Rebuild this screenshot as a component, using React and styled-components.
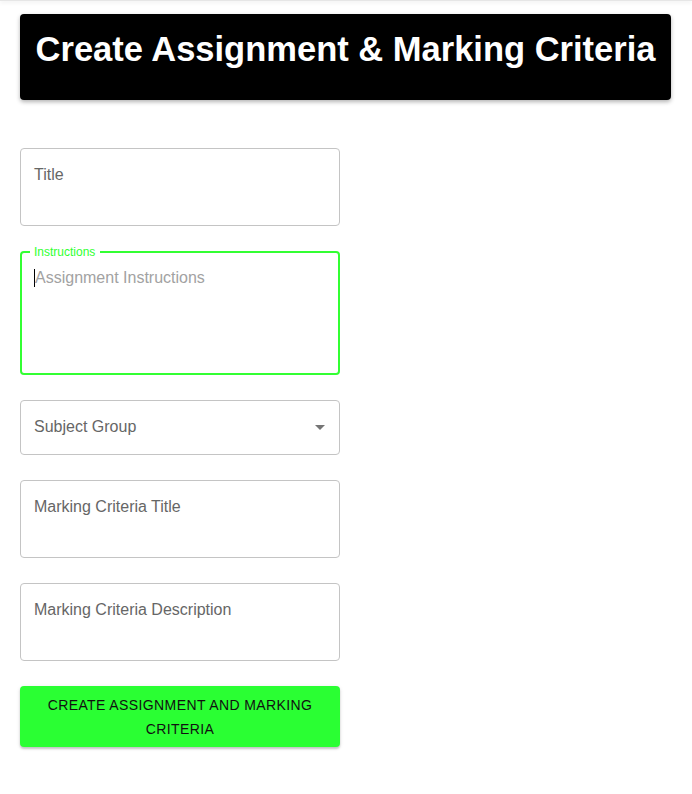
import React from "react";
import styled, { createGlobalStyle } from "styled-components";

const GlobalStyle = createGlobalStyle`
  body {
    margin: 0;
    background: #ffffff;
    font-family: "Liberation Sans", Arial, Helvetica, sans-serif;
  }
`;

const TopShade = styled.div`
  height: 1px;
  background: #e6e6e6;
  box-shadow: 0 1px 4px rgba(0, 0, 0, 0.18);
`;

const Page = styled.div`
  padding: 13px 21px 40px 20px;
`;

const Header = styled.div`
  background: #000;
  border-radius: 4px;
  box-shadow: 0 2px 4px rgba(0, 0, 0, 0.3);
  padding: 15px 0 31px;
  text-align: center;
`;

const HeaderTitle = styled.h1`
  margin: 0;
  color: #fff;
  font-size: 34.5px;
  line-height: 40px;
  font-weight: 700;
`;

const Form = styled.div`
  width: 320px;
  margin-top: 48px;
  display: flex;
  flex-direction: column;
  gap: 25px;
`;

const Field = styled.div`
  position: relative;
  box-sizing: border-box;
  height: ${(p) => p.$height}px;
  border: ${(p) => (p.$focused ? "2px solid #33ff33" : "1px solid #c4c4c4")};
  border-radius: 4px;
  padding: ${(p) => (p.$focused ? "13px 12px" : "14px 13px")};
  display: flex;
  align-items: flex-start;
  justify-content: space-between;
`;

const FieldText = styled.span`
  font-size: 16px;
  line-height: 23px;
  color: ${(p) => (p.$placeholder ? "#a2a2a2" : "#666666")};
  display: flex;
  align-items: center;
`;

const Caret = styled.span`
  display: inline-block;
  width: 1px;
  height: 18px;
  background: #000;
`;

const FloatLabel = styled.span`
  position: absolute;
  top: -8px;
  left: 8px;
  padding: 0 5px 0 4px;
  background: #fff;
  font-size: 12px;
  line-height: 14px;
  color: #2fff2f;
`;

const Arrow = styled.span`
  width: 0;
  height: 0;
  margin-top: 10px;
  margin-right: 1px;
  border-left: 5px solid transparent;
  border-right: 5px solid transparent;
  border-top: 5px solid #757575;
`;

const SubmitButton = styled.button`
  box-sizing: border-box;
  width: 320px;
  border: none;
  border-radius: 4px;
  background: #2aff33;
  box-shadow: 0 2px 2px rgba(0, 0, 0, 0.18), 0 1px 4px rgba(0, 0, 0, 0.1);
  padding: 6.5px 16px;
  font-family: "Liberation Sans", Arial, sans-serif;
  font-size: 14px;
  line-height: 24px;
  letter-spacing: 0.4px;
  text-transform: uppercase;
  color: #111;
  cursor: pointer;
`;

export default function App() {
  return (
    <>
      <GlobalStyle />
      <TopShade />
      <Page>
        <Header>
          <HeaderTitle>Create Assignment &amp; Marking Criteria</HeaderTitle>
        </Header>
        <Form>
          <Field $height={78}>
            <FieldText>Title</FieldText>
          </Field>
          <Field $height={124} $focused>
            <FloatLabel>Instructions</FloatLabel>
            <FieldText $placeholder>
              <Caret />
              Assignment Instructions
            </FieldText>
          </Field>
          <Field $height={55}>
            <FieldText>Subject Group</FieldText>
            <Arrow />
          </Field>
          <Field $height={78}>
            <FieldText>Marking Criteria Title</FieldText>
          </Field>
          <Field $height={78}>
            <FieldText>Marking Criteria Description</FieldText>
          </Field>
          <SubmitButton>Create Assignment and Marking Criteria</SubmitButton>
        </Form>
      </Page>
    </>
  );
}
